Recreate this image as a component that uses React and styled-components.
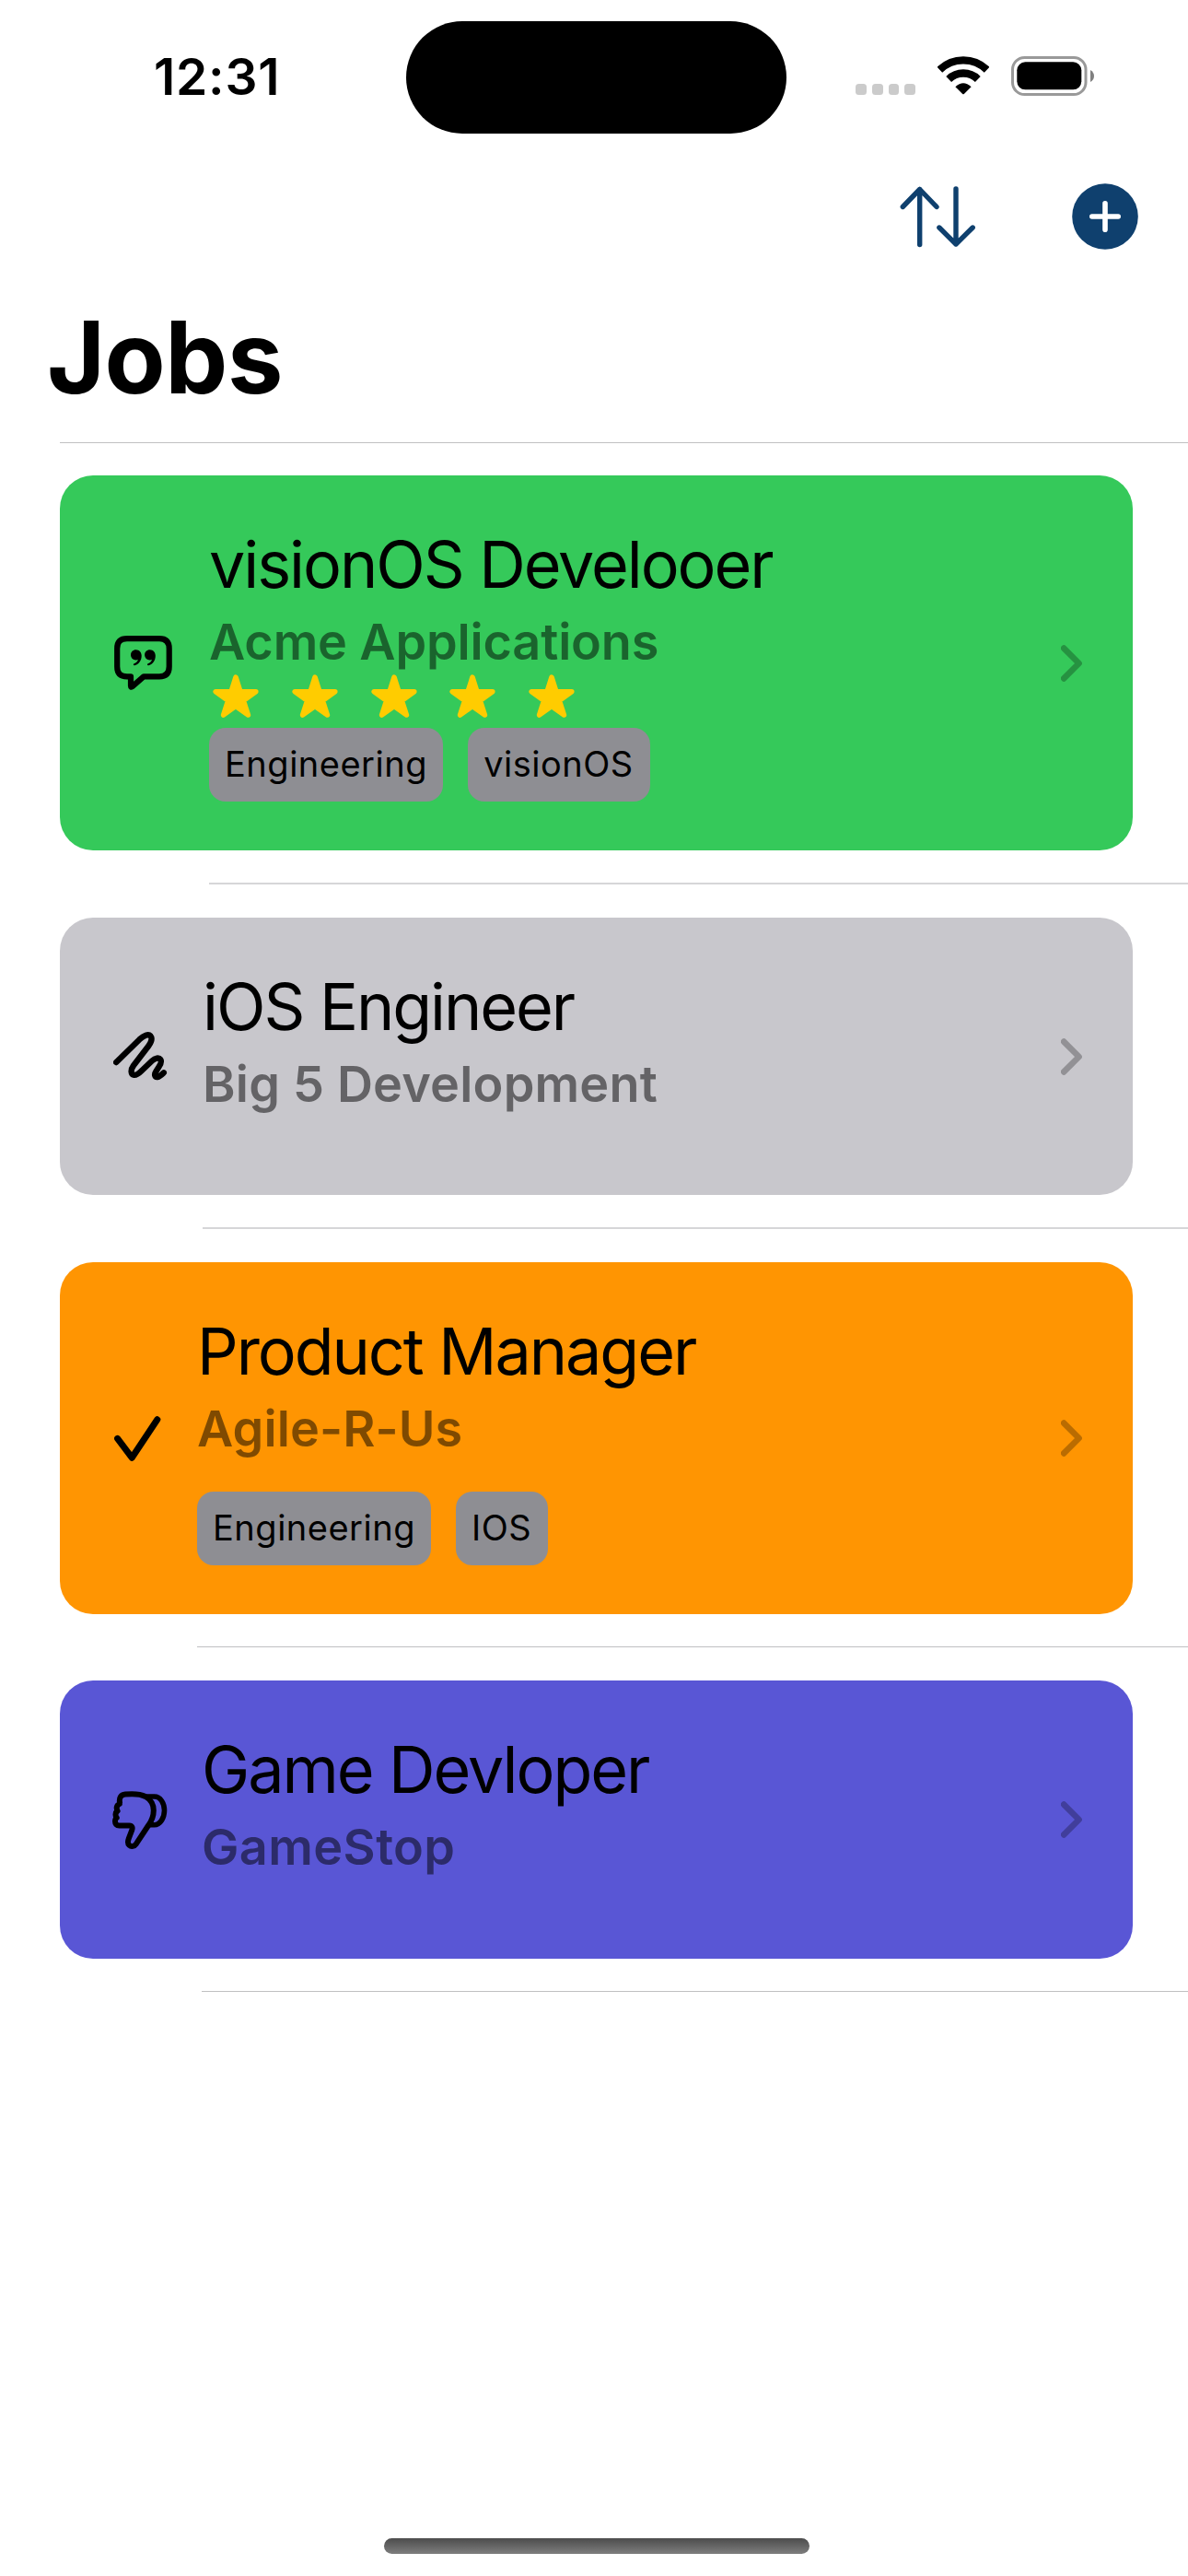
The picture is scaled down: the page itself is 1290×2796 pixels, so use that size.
import React from 'react'
import styled, { createGlobalStyle } from 'styled-components'

const GlobalStyle = createGlobalStyle`
    * {
        box-sizing: border-box;
    }
    body {
        margin: 0;
        background: #ffffff;
        font-family: Inter, "Liberation Sans", sans-serif;
        color: #000000;
    }
    svg {
        display: block;
        flex: none;
    }
`

const Screen = styled.div`
    display: flex;
    flex-direction: column;
    width: 1290px;
    height: 2796px;
    background: #ffffff;
    overflow: hidden;
`

const StatusBar = styled.header`
    display: flex;
    height: 166px;
    padding: 23px 101px 0 167px;
`

const Clock = styled.div`
    width: 274px;
    height: 122px;
    padding-top: 27px;
    font-size: 55px;
    font-weight: 600;
    line-height: 66px;
    letter-spacing: 0.8px;
    white-space: nowrap;
`

const Island = styled.div`
    width: 413px;
    height: 122px;
    border-radius: 61px;
    background: #000000;
`

const StatusIcons = styled.div`
    display: flex;
    margin-left: auto;
    padding-top: 38px;
`

const Signal = styled.div`
    display: flex;
    gap: 6px;
    margin: 30px 24px 0 0;
`

const SignalDot = styled.span`
    width: 11.7px;
    height: 11.7px;
    border-radius: 3.5px;
    background: #cbcbcb;
`

const Battery = styled.div`
    margin-left: 24px;
`

const Toolbar = styled.nav`
    display: flex;
    align-items: center;
    justify-content: flex-end;
    gap: 105px;
    height: 138px;
    padding-right: 54px;
`

const PageTitle = styled.h1`
    height: 176px;
    margin: 0;
    padding: 18px 0 0 51px;
    font-size: 108px;
    font-weight: 700;
    line-height: 132px;
    letter-spacing: -0.5px;
`

const List = styled.ul`
    margin: -1px 0 0;
    padding: 0;
    list-style: none;
`

const Separator = styled.div`
    height: ${({ $soft }) => ($soft ? 2 : 1)}px;
    margin-left: ${({ $inset }) => $inset}px;
    background: ${({ $soft }) => ($soft ? '#d6d6d8' : '#c0c0c2')};
`

const Card = styled.div`
    display: flex;
    align-items: center;
    height: ${({ $height }) => $height}px;
    margin: 36px 60px 35px 65px;
    padding: 0 54px 0 57px;
    border-radius: 36px;
    background: ${({ $color }) => $color};
`

const IconSlot = styled.div`
    width: ${({ $width }) => $width}px;
    padding-left: ${({ $nudge }) => $nudge || 0}px;
`

const Details = styled.div`
    flex: 1;
    align-self: flex-start;
    padding-top: 54.5px;
`

const JobTitle = styled.div`
    font-size: 70px;
    font-weight: 400;
    line-height: 84px;
    letter-spacing: -2.05px;
    white-space: nowrap;
`

const Company = styled.div`
    font-size: 54px;
    font-weight: 600;
    line-height: 84px;
    letter-spacing: ${({ $tracking }) => $tracking}px;
    color: rgba(0, 0, 0, 0.5);
    white-space: nowrap;
`

const Stars = styled.div`
    display: flex;
    gap: 35.8px;
    margin: -6.5px 0 -15px 4px;
`

const Tags = styled.div`
    display: flex;
    gap: 26.5px;
    margin-top: 26px;
`

const Tag = styled.span`
    width: ${({ $width }) => $width}px;
    height: 80px;
    border-radius: 18px;
    background: #8e8e93;
    font-size: 38px;
    line-height: 79px;
    letter-spacing: 0.5px;
    text-align: center;
    white-space: nowrap;
`

const HomeIndicator = styled.div`
    width: 462px;
    height: 17px;
    margin: auto auto 24px 417px;
    border-radius: 9px;
    background: linear-gradient(#4c4c4c, #7e7e7e);
`

const WifiIcon = () => (
    <svg width="56" height="43" viewBox="0 0 56 43" fill="none" stroke="#000" strokeWidth="8.3">
        <path d="M2.3 14.7A36.9 36.9 0 0 1 53.7 14.7" />
        <path d="M12.2 24.9A22.7 22.7 0 0 1 43.8 24.9" />
        <path d="M19.4 33.2Q28 25.2 36.6 33.2L28.8 41Q28 41.7 27.2 41Z" fill="#000" stroke="none" />
    </svg>
)

const BatteryIcon = () => (
    <svg width="91" height="43" viewBox="0 0 91 43">
        <rect x="1.5" y="1.5" width="79.5" height="40" rx="13" fill="none" stroke="#999" strokeWidth="3" />
        <rect x="6.3" y="6.3" width="70" height="30" rx="9" fill="#000" />
        <path d="M86 15V28Q90 25.5 90 21.5T86 15Z" fill="#808080" />
    </svg>
)

const SortIcon = () => (
    <svg width="82" height="68" viewBox="0 0 82 68" fill="none" stroke="#0f406e" strokeWidth="5.4" strokeLinecap="round" strokeLinejoin="round">
        <path d="M21.7 64.5V4.5M3.3 23.5L21.7 4.5L40 23.5" />
        <path d="M61 4V64M42.9 46L61 64L79.2 46" />
    </svg>
)

const AddIcon = () => (
    <svg width="72" height="72" viewBox="0 0 72 72">
        <circle cx="36" cy="36" r="35.8" fill="#0f406e" />
        <path d="M36 21.8V50.2M21.8 36H50.2" stroke="#fff" strokeWidth="5.6" strokeLinecap="round" />
    </svg>
)

const QuoteBubbleIcon = () => (
    <svg width="63" height="59" viewBox="0 0 63 59" fill="none" stroke="#000" strokeWidth="6.2" strokeLinejoin="round">
        <path d="M14 3.2H49Q59.7 3.2 59.7 14V33.5Q59.7 44.3 49 44.3H32L19.4 55.3Q18 56.3 18 54.6V44.3H14Q3.2 44.3 3.2 33.5V14Q3.2 3.2 14 3.2Z" />
        <g fill="#000" stroke="none">
            <path id="quote" d="M23.6 15.2C27.3 15.2 29.7 18 29.7 21.8C29.7 27.5 26.3 31.2 22.2 32.2C20.8 32.5 20.3 30.9 21.6 30.3C23.9 29.4 25.4 28 25.9 26.1C22 27.6 18 25 18 20.8C18 17.6 20.4 15.2 23.6 15.2Z" />
            <use href="#quote" x="15.1" />
        </g>
    </svg>
)

const ScribbleIcon = () => (
    <svg width="59" height="53" viewBox="0 0 59 53" fill="none" stroke="#000" strokeWidth="6.4" strokeLinecap="round" strokeLinejoin="round">
        <path d="M3.2 33L28.5 8.2C33 4 38 1.8 40.5 4.5C43 7.4 41 11.3 38.5 15L22 36.5C18.5 41.3 19 46.3 22.5 46.8C25.5 47.2 28.5 44.5 31 42L42 31.5C45.5 28.3 49.5 27.6 51.3 30C53 32.5 51.5 35 49.5 38L46.5 42.7C44 46.5 45.2 49.3 48 49C50.5 48.5 52.5 46.5 54.8 44.3" />
    </svg>
)

const CheckIcon = () => (
    <svg width="51" height="49" viewBox="0 0 51 49" fill="none" stroke="#000" strokeWidth="7" strokeLinecap="round" strokeLinejoin="round">
        <path d="M3.6 24.4L19.2 45.2L46.8 3.8" />
    </svg>
)

const ThumbsDownIcon = () => (
    <svg width="61" height="63" viewBox="0 0 61 63" fill="none" stroke="#000" strokeWidth="6" strokeLinecap="round" strokeLinejoin="round">
        <path d="M8 12.5C7.2 7.5 9 4 14 3.6C22 2.8 30.5 3.2 36 6C42.5 9.8 44.8 15 44.8 21C44.8 27 43 32 39.3 37L26 57.2C23.8 60.3 20.5 60.7 18.3 58.8C16.3 57 16.7 54.5 17.8 51.5L21.2 42.5C22.3 39.5 21.3 37.6 18.5 37.6H7.5C4.5 37.6 3 35.5 3 33C3 31 3.5 29.8 4.7 29C3 27 3 23.5 5.6 21.5C4 19 4.5 15.3 7.8 14" />
        <path d="M38 6H45.5C52.5 6 56.5 13.5 56.5 21C56.5 29 52 36.8 45.5 36.8H40.5" strokeWidth="5.6" />
    </svg>
)

const StarIcon = () => (
    <svg width="50" height="47" viewBox="0 0 50 47" fill="#ffcc00" stroke="#ffcc00" strokeWidth="5.6" strokeLinejoin="round">
        <path d="M25 3.2L29.9 18.7H46.8L33.3 28.4L38.4 44L25 34.4L11.6 44L16.7 28.4L3.2 18.7H20.1Z" />
    </svg>
)

const ChevronIcon = () => (
    <svg width="24" height="40" viewBox="0 0 24 40" fill="none" stroke="rgba(0, 0, 0, 0.27)" strokeWidth="6.6" strokeLinecap="round" strokeLinejoin="round">
        <path d="M3.2 3.6L19.6 20L3.2 36.4" />
    </svg>
)

const jobs = [
    {
        title: 'visionOS Develooer',
        company: 'Acme Applications',
        color: '#35c95a',
        height: 407,
        inset: 227,
        softLine: true,
        icon: <QuoteBubbleIcon />,
        nudge: 2,
        rating: 5,
        tags: [{ name: 'Engineering', width: 254 }, { name: 'visionOS', width: 198 }],
        tracking: -0.15,
    },
    {
        title: 'iOS Engineer',
        company: 'Big 5 Development',
        color: '#c8c7cc',
        height: 301,
        inset: 220,
        softLine: true,
        icon: <ScribbleIcon />,
        nudge: 1,
        tracking: 0.2,
    },
    {
        title: 'Product Manager',
        company: 'Agile-R-Us',
        color: '#ff9502',
        height: 382,
        inset: 214,
        icon: <CheckIcon />,
        nudge: 2,
        tags: [{ name: 'Engineering', width: 254 }, { name: 'IOS', width: 100 }],
        tracking: 0.1,
    },
    {
        title: 'Game Devloper',
        company: 'GameStop',
        color: '#5956d5',
        height: 302,
        inset: 219,
        icon: <ThumbsDownIcon />,
        tracking: 0.4,
    },
]

const JobRow = ({ job }) => (
    <li>
        <Card $color={job.color} $height={job.height}>
            <IconSlot $width={job.inset - 122} $nudge={job.nudge}>{job.icon}</IconSlot>
            <Details>
                <JobTitle>{job.title}</JobTitle>
                <Company $tracking={job.tracking}>{job.company}</Company>
                {job.rating && (
                    <Stars>
                        {Array.from({ length: job.rating }, (_, i) => <StarIcon key={i} />)}
                    </Stars>
                )}
                {job.tags && (
                    <Tags>
                        {job.tags.map(tag => <Tag key={tag.name} $width={tag.width}>{tag.name}</Tag>)}
                    </Tags>
                )}
            </Details>
            <ChevronIcon />
        </Card>
        <Separator $inset={job.inset} $soft={job.softLine} />
    </li>
)

const App = () => (
    <Screen>
        <GlobalStyle />
        <StatusBar>
            <Clock>12:31</Clock>
            <Island />
            <StatusIcons>
                <Signal>
                    <SignalDot />
                    <SignalDot />
                    <SignalDot />
                    <SignalDot />
                </Signal>
                <WifiIcon />
                <Battery>
                    <BatteryIcon />
                </Battery>
            </StatusIcons>
        </StatusBar>
        <Toolbar>
            <SortIcon />
            <AddIcon />
        </Toolbar>
        <PageTitle>Jobs</PageTitle>
        <Separator $inset={65} />
        <List>
            {jobs.map(job => <JobRow key={job.title} job={job} />)}
        </List>
        <HomeIndicator />
    </Screen>
)

export default App
